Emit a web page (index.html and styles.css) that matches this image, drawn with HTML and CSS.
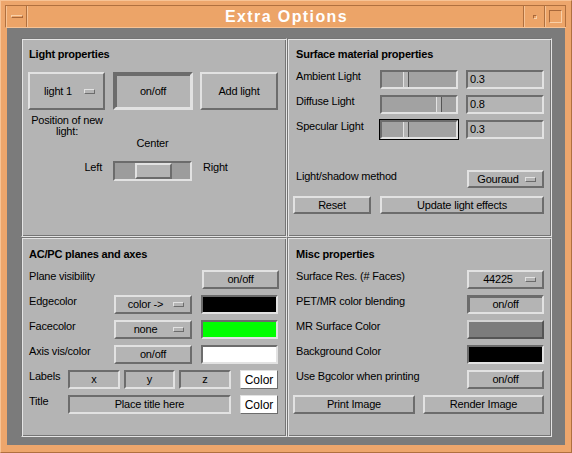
FILE: index.html
```html
<!DOCTYPE html>
<html lang="en">

<head>
    <meta charset="UTF-8">
    <title>Extra Options</title>
    <link rel="stylesheet" href="styles.css">
</head>

<body>
    <div class="window">
        <div class="titlebar">
            <div class="tb-button tb-menu"><span class="tb-minus"></span></div>
            <div class="tb-title">Extra Options</div>
            <div class="tb-button tb-iconify"><span class="tb-dot"></span></div>
            <div class="tb-button tb-maximize"><span class="tb-square"></span></div>
        </div>

        <div class="client">
            <div class="panel">

                <!-- Light properties -->
                <section class="cell cell-left cell-top">
                    <h2 class="cell-title">Light properties</h2>
                    <div class="light-buttons">
                        <div class="option-menu big w77"><span class="option-text">light 1</span><span class="indicator"></span></div>
                        <button class="btn big pressed w80">on/off</button>
                        <button class="btn big w78">Add light</button>
                    </div>
                    <div class="position-label">Position of new<br>light:</div>
                    <div class="center-label">Center</div>
                    <div class="position-row">
                        <span class="side-label left-label">Left</span>
                        <div class="trough wide">
                            <span class="wide-thumb" style="margin-left: 20px"></span>
                        </div>
                        <span class="side-label">Right</span>
                    </div>
                </section>

                <!-- Surface material properties -->
                <section class="cell cell-right cell-top">
                    <h2 class="cell-title">Surface material properties</h2>
                    <div class="row first">
                        <span class="label w87">Ambient Light</span>
                        <div class="trough w78"><span class="thumb" style="margin-left: 21px"></span></div>
                        <div class="field gap8 w78">0.3</div>
                    </div>
                    <div class="row">
                        <span class="label w87">Diffuse Light</span>
                        <div class="trough w78"><span class="thumb" style="margin-left: 54px"></span></div>
                        <div class="field gap8 w78">0.8</div>
                    </div>
                    <div class="row">
                        <span class="label w87">Specular Light</span>
                        <div class="focus"><div class="trough w78"><span class="thumb" style="margin-left: 21px"></span></div></div>
                        <div class="field gap8 w78">0.3</div>
                    </div>
                    <div class="row method-row">
                        <span class="label grow">Light/shadow method</span>
                        <div class="option-menu w77"><span class="option-text">Gouraud</span><span class="indicator"></span></div>
                    </div>
                    <div class="row button-row">
                        <button class="btn w78">Reset</button>
                        <button class="btn gap9 w164">Update light effects</button>
                    </div>
                </section>

                <!-- AC/PC planes and axes -->
                <section class="cell cell-left cell-bottom">
                    <h2 class="cell-title">AC/PC planes and axes</h2>
                    <div class="row first">
                        <span class="label grow">Plane visibility</span>
                        <button class="btn w77">on/off</button>
                    </div>
                    <div class="row">
                        <span class="label w86">Edgecolor</span>
                        <div class="option-menu w78"><span class="option-text">color -&gt;</span><span class="indicator"></span></div>
                        <div class="swatch gap9 w77 black"></div>
                    </div>
                    <div class="row">
                        <span class="label w86">Facecolor</span>
                        <div class="option-menu w78"><span class="option-text">none</span><span class="indicator"></span></div>
                        <div class="swatch gap9 w77 green"></div>
                    </div>
                    <div class="row">
                        <span class="label w86">Axis vis/color</span>
                        <button class="btn w78">on/off</button>
                        <div class="swatch gap9 w77 white"></div>
                    </div>
                    <div class="row">
                        <span class="label w40">Labels</span>
                        <div class="field centered w52">x</div>
                        <div class="field centered gap4 w51">y</div>
                        <div class="field centered gap4 w52">z</div>
                        <button class="color-btn gap9">Color</button>
                    </div>
                    <div class="row">
                        <span class="label w40">Title</span>
                        <div class="field centered w163">Place title here</div>
                        <button class="color-btn gap9">Color</button>
                    </div>
                </section>

                <!-- Misc properties -->
                <section class="cell cell-right cell-bottom">
                    <h2 class="cell-title">Misc properties</h2>
                    <div class="row first">
                        <span class="label grow">Surface Res. (# Faces)</span>
                        <div class="option-menu w77"><span class="option-text">44225</span><span class="indicator"></span></div>
                    </div>
                    <div class="row">
                        <span class="label grow">PET/MR color blending</span>
                        <button class="btn pressed w77">on/off</button>
                    </div>
                    <div class="row">
                        <span class="label grow">MR Surface Color</span>
                        <div class="swatch raised w77 gray"></div>
                    </div>
                    <div class="row">
                        <span class="label grow">Background Color</span>
                        <div class="swatch w77 black"></div>
                    </div>
                    <div class="row">
                        <span class="label grow">Use Bgcolor when printing</span>
                        <button class="btn w77">on/off</button>
                    </div>
                    <div class="row">
                        <button class="btn w122">Print Image</button>
                        <button class="btn gap8 w121">Render Image</button>
                    </div>
                </section>

            </div>
        </div>
    </div>
</body>

</html>
```

FILE: styles.css
```css
* {
    box-sizing: border-box;
}

body {
    margin: 0;
    font-family: "Liberation Sans", Arial, sans-serif;
    font-size: 11px;
    letter-spacing: -0.2px;
    color: #000;
}

/* window frame */

.window {
    width: 572px;
    height: 453px;
    padding: 4px 5px 8px 4px;
    background-color: #eda66c;
    border-top: 1px solid #f7c395;
    border-left: 1px solid #f7c395;
    border-right: 1px solid #b0703f;
    border-bottom: 1px solid #b0703f;
}

.titlebar {
    display: flex;
    height: 23px;
    background-color: #eca468;
    border-top: 1px solid #b0703f;
    border-left: 1px solid #b0703f;
    border-bottom: 1px solid #f7c395;
}

.tb-button {
    display: flex;
    align-items: center;
    justify-content: center;
    width: 21px;
    border-left: 1px solid #f7c395;
    border-right: 1px solid #b0703f;
}

.tb-minus {
    width: 12px;
    height: 3px;
    border-top: 1px solid #f9d0a8;
    border-bottom: 1px solid #a8683a;
    border-left: 1px solid #f9d0a8;
    border-right: 1px solid #a8683a;
}

.tb-title {
    flex: 1;
    padding-left: 22px;
    text-align: center;
    line-height: 21px;
    color: #fff;
    font-size: 16px;
    font-weight: bold;
    letter-spacing: 1.4px;
    border-left: 1px solid #f7c395;
    border-right: 1px solid #b0703f;
}

.tb-dot {
    width: 4px;
    height: 4px;
    border-top: 1px solid #a8683a;
    border-left: 1px solid #a8683a;
    border-right: 1px solid #f9d0a8;
    border-bottom: 1px solid #f9d0a8;
}

.tb-square {
    width: 13px;
    height: 13px;
    border-top: 1px solid #a8683a;
    border-left: 1px solid #a8683a;
    border-right: 1px solid #f9d0a8;
    border-bottom: 1px solid #f9d0a8;
}

.client {
    height: 417px;
    margin: 0 1px 0 2px;
    padding: 10px 13px 8px 14px;
    background-color: #7b7b7b;
}

.panel {
    display: grid;
    grid-template-columns: 266px 265px;
    grid-template-rows: 199px 200px;
    background-color: #b4b4b4;
}

.cell {
    display: flex;
    flex-direction: column;
    padding-right: 7px;
    border: 1px solid;
    border-color: #757575 #e4e4e4 #e4e4e4 #757575;
    box-shadow: inset 1px 1px 0 #e4e4e4, inset -1px -1px 0 #757575;
}

.cell-left {
    padding-left: 6px;
}

.cell-right {
    padding-left: 5px;
}

.cell-top {
    padding-top: 8px;
}

.cell-bottom {
    padding-top: 9px;
}

.cell-title {
    margin: 0;
    padding-left: 1px;
    font-size: 11px;
    line-height: 14px;
    font-weight: bold;
}

.cell-right .cell-title {
    padding-left: 3px;
}

/* rows */

.row {
    display: flex;
    align-items: flex-start;
    height: 19px;
    margin-top: 6px;
}

.row.first {
    margin-top: 9px;
}

.method-row {
    margin-top: 31px;
    height: 18px;
}

.button-row {
    margin-top: 8px;
    height: 18px;
}

.label {
    padding-left: 1px;
    line-height: 13px;
    white-space: nowrap;
}

.cell-right .label {
    padding-left: 3px;
}

.grow {
    flex: 1;
}

.w40 { width: 40px; }
.w51 { width: 51px; }
.w52 { width: 52px; }
.w77 { width: 77px; }
.w78 { width: 78px; }
.w80 { width: 80px; }
.w86 { width: 86px; }
.w87 { width: 87px; }
.w121 { width: 121px; }
.w122 { width: 122px; }
.w163 { width: 163px; }
.w164 { width: 164px; }

.gap4 { margin-left: 4px; }
.gap8 { margin-left: 8px; }
.gap9 { margin-left: 9px; }

/* motif-like widgets */

.btn,
.option-menu {
    height: 100%;
    padding: 0;
    font-family: inherit;
    font-size: 11px;
    letter-spacing: -0.2px;
    color: #000;
    background-color: #b4b4b4;
    border: 2px solid;
    border-color: #e2e2e2 #6c6c6c #6c6c6c #e2e2e2;
    text-align: center;
    line-height: 15px;
}

.btn.pressed {
    border-color: #6c6c6c #e2e2e2 #e2e2e2 #6c6c6c;
    box-shadow: inset 1px 1px 0 #6c6c6c;
}

.btn.big.pressed {
    border-width: 3px;
}

.option-menu {
    display: flex;
    align-items: center;
}

.option-text {
    flex: 1;
    text-align: center;
    padding-left: 2px;
}

.indicator {
    width: 11px;
    height: 5px;
    margin-right: 6px;
    border: 1px solid;
    border-color: #e2e2e2 #6c6c6c #6c6c6c #e2e2e2;
}

.light-buttons {
    display: flex;
    height: 38px;
    margin-top: 11px;
}

.light-buttons .btn:nth-child(2) {
    margin-left: 8px;
}

.light-buttons .btn:nth-child(3) {
    margin-left: 7px;
}

.light-buttons .indicator {
    margin-right: 8px;
}

.field,
.swatch {
    height: 100%;
    border: 2px solid;
    border-color: #6c6c6c #e2e2e2 #e2e2e2 #6c6c6c;
    background-color: #b4b4b4;
    line-height: 15px;
    padding-left: 2px;
}

.field.centered {
    text-align: center;
    padding-left: 0;
}

.swatch.black { background-color: #000; }
.swatch.white { background-color: #fff; }
.swatch.green { background-color: #00ff00; }
.swatch.gray { background-color: #7c7c7c; }

.swatch.raised {
    border-color: #d4d4d4 #555 #555 #d4d4d4;
}

.color-btn {
    width: 38px;
    height: 100%;
    padding: 0;
    font-family: inherit;
    font-size: 12px;
    letter-spacing: 0;
    background-color: #fff;
    border: 1px solid;
    border-color: #e2e2e2 #6c6c6c #6c6c6c #e2e2e2;
}

/* sliders */

.trough {
    display: flex;
    height: 19px;
    border: 2px solid;
    border-color: #6c6c6c #e2e2e2 #e2e2e2 #6c6c6c;
    background-color: #a2a2a2;
}

.focus {
    margin: -1px;
    border: 1px solid #000;
}

.thumb {
    width: 6px;
    height: 100%;
    background-color: #b4b4b4;
    border-left: 1px solid #e2e2e2;
    border-right: 1px solid #555;
}

.position-label {
    width: 78px;
    margin-top: 5px;
    text-align: center;
    line-height: 11px;
    white-space: nowrap;
}

.center-label {
    width: 79px;
    margin-left: 85px;
    text-align: center;
    line-height: 12px;
}

.position-row {
    display: flex;
    align-items: flex-start;
    margin-top: 12px;
}

.side-label {
    line-height: 13px;
}

.left-label {
    width: 74px;
    margin-right: 11px;
    text-align: right;
}

.trough.wide {
    width: 79px;
    height: 20px;
    margin-right: 11px;
    background-color: #9c9c9c;
}

.wide-thumb {
    width: 37px;
    height: 100%;
    background-color: #b4b4b4;
    border: 2px solid;
    border-color: #e2e2e2 #6c6c6c #6c6c6c #e2e2e2;
}
```
